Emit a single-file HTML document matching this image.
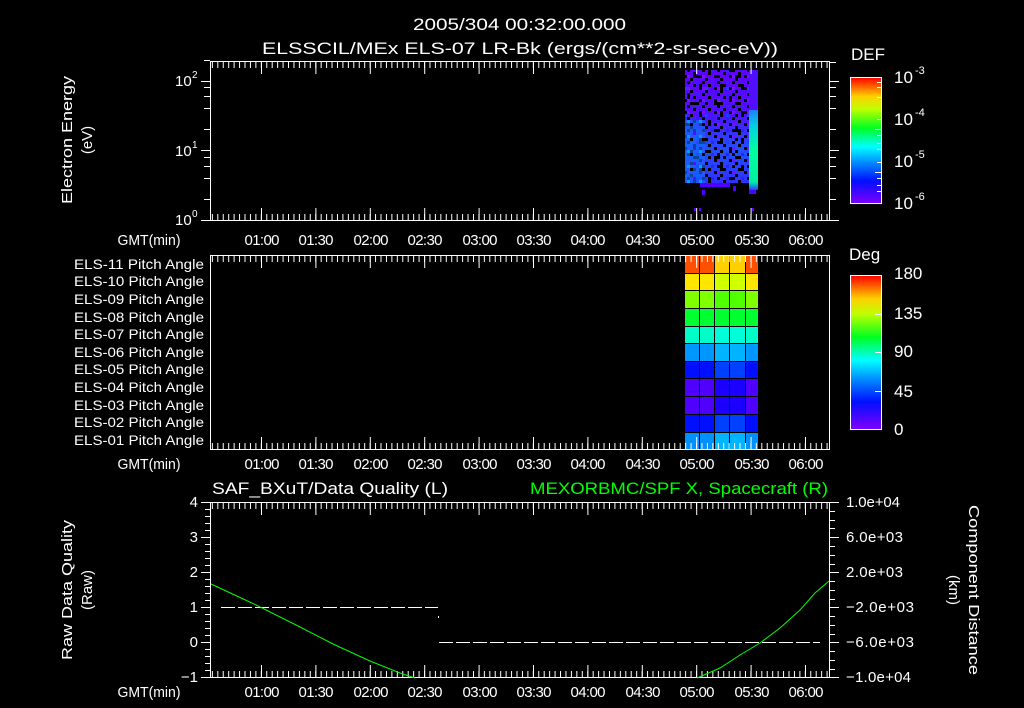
<!DOCTYPE html>
<html><head><meta charset="utf-8"><style>
html,body{margin:0;padding:0;background:#000;width:1024px;height:708px;overflow:hidden}
svg{display:block}
text{font-family:"Liberation Sans",sans-serif;fill:#fff}
</style></head><body>
<svg width="1024" height="708" viewBox="0 0 1024 708" xmlns="http://www.w3.org/2000/svg">
<defs>
<pattern id="noise" patternUnits="userSpaceOnUse" width="15" height="12">
<rect x="3" y="0" width="3" height="3" fill="#000"/><rect x="9" y="3" width="3" height="3" fill="#000"/>
<rect x="0" y="6" width="3" height="3" fill="#000"/><rect x="12" y="9" width="3" height="3" fill="#000"/>
<rect x="6" y="9" width="3" height="3" fill="#3020ff"/><rect x="12" y="3" width="3" height="3" fill="#7a10ff"/>
</pattern>
<pattern id="noiseb" patternUnits="userSpaceOnUse" width="21" height="27">
<rect x="6" y="3" width="3" height="6" fill="#000"/><rect x="15" y="15" width="3" height="3" fill="#000"/>
<rect x="0" y="21" width="6" height="3" fill="#000"/><rect x="12" y="6" width="3" height="3" fill="#2040ff"/>
</pattern>
<pattern id="noise2" patternUnits="userSpaceOnUse" width="12" height="15">
<rect x="6" y="3" width="3" height="3" fill="#000"/><rect x="0" y="9" width="3" height="3" fill="#1060ff"/>
<rect x="9" y="12" width="3" height="3" fill="#5010ff"/><rect x="3" y="0" width="3" height="3" fill="#00a0ff"/>
</pattern>
<linearGradient id="defbar" x1="0" y1="1" x2="0" y2="0">
<stop offset="0" stop-color="#8000ff"/><stop offset="0.18" stop-color="#0010ff"/><stop offset="0.33" stop-color="#0090ff"/>
<stop offset="0.45" stop-color="#00ffff"/><stop offset="0.6" stop-color="#00ff20"/><stop offset="0.75" stop-color="#c0ff00"/>
<stop offset="0.85" stop-color="#ffd000"/><stop offset="1" stop-color="#ff0000"/>
</linearGradient>
<linearGradient id="blue" x1="0" y1="0" x2="0" y2="1">
<stop offset="0" stop-color="#6000ff"/><stop offset="0.4" stop-color="#5010ff"/><stop offset="0.7" stop-color="#2050ff"/><stop offset="1" stop-color="#3030ff"/>
</linearGradient>
<linearGradient id="grn" x1="0" y1="0" x2="0" y2="1">
<stop offset="0" stop-color="#2080ff"/><stop offset="0.2" stop-color="#00d0e0"/><stop offset="0.5" stop-color="#00ffa0"/><stop offset="0.9" stop-color="#00f0a0"/><stop offset="1" stop-color="#2040ff"/>
</linearGradient>
</defs>

<text x="413" y="30" font-size="17" textLength="213" lengthAdjust="spacingAndGlyphs">2005/304 00:32:00.000</text>
<text x="262" y="54" font-size="17" textLength="516" lengthAdjust="spacingAndGlyphs">ELSSCIL/MEx ELS-07 LR-Bk  (ergs/(cm**2-sr-sec-eV))</text>

<rect x="685" y="70" width="64" height="113" fill="url(#blue)"/>
<rect x="685" y="70" width="64" height="113" fill="url(#noise)"/>
<rect x="685" y="70" width="64" height="113" fill="url(#noiseb)"/>
<rect x="685" y="120" width="20" height="63" fill="#1070ff" opacity="0.6"/>
<rect x="685" y="120" width="20" height="63" fill="url(#noise2)"/>
<rect x="749" y="70" width="9" height="40" fill="#5010ff"/>
<rect x="749" y="110" width="9" height="80" fill="url(#grn)"/>
<rect x="749" y="190" width="7" height="4" fill="#5000ff"/>
<rect x="700" y="183" width="30" height="4" fill="#5000ff"/>
<rect x="702" y="190" width="3" height="5" fill="#5000ff"/>
<rect x="733" y="186" width="3" height="5" fill="#5000ff"/>
<rect x="694" y="208" width="2" height="3" fill="#6000ff"/><rect x="699" y="208" width="2" height="3" fill="#6000ff"/><rect x="752" y="208" width="2" height="3" fill="#6000ff"/>
<rect x="210.5" y="61.5" width="619" height="159" fill="none" stroke="#fff" stroke-width="1"/>
<g stroke="#fff">
<line x1="211.86" y1="65" x2="829" y2="65" stroke-width="6" stroke-dasharray="1 4.44"/>
<line x1="261" y1="68" x2="829" y2="68" stroke-width="12" stroke-dasharray="1 53.4"/>
<line x1="211.86" y1="217" x2="829" y2="217" stroke-width="6" stroke-dasharray="1 4.44"/>
<line x1="261" y1="214" x2="829" y2="214" stroke-width="12" stroke-dasharray="1 53.4"/>
</g>
<g stroke="#fff" stroke-width="1">
<path d="M201 220.5H210M204 199.5H210M204 178.5H210M204 166.5H210M204 157.5H210M201 150.5H210M204 129.5H210M204 108.5H210M204 96.5H210M204 87.5H210M201 81.5H210M204 60.5H210"/>
<path d="M830 220.5H839M830 199.5H836M830 178.5H836M830 166.5H836M830 157.5H836M830 150.5H839M830 129.5H836M830 108.5H836M830 96.5H836M830 87.5H836M830 81.5H839M830 62.5H836"/>
</g>
<text x="175" y="225" font-size="15">10</text><text x="192" y="217" font-size="10">0</text>
<text x="175" y="156" font-size="15">10</text><text x="192" y="148" font-size="10">1</text>
<text x="175" y="86" font-size="15">10</text><text x="192" y="78" font-size="10">2</text>
<text transform="translate(72,140) rotate(-90)" font-size="15" text-anchor="middle" textLength="128" lengthAdjust="spacingAndGlyphs">Electron Energy</text>
<text transform="translate(92,140) rotate(-90)" font-size="15" text-anchor="middle">(eV)</text>
<text x="851" y="60" font-size="17">DEF</text>
<rect x="850.5" y="77.5" width="31" height="126" fill="url(#defbar)" stroke="#fff"/>
<g stroke="#fff"><path d="M877 82.5H882M877 87.5H882M877 97.5H882M877 119.5H882M875 129.5H882M877 135.5H882M877 143.5H882M877 149.5H882M877 162.5H882M875 172.5H882M877 178.5H882M877 185.5H882M877 191.5H882"/></g>
<text x="894" y="83" font-size="17">10</text><text x="915" y="74" font-size="11">-3</text>
<text x="894" y="125" font-size="17">10</text><text x="915" y="116" font-size="11">-4</text>
<text x="894" y="167" font-size="17">10</text><text x="915" y="158" font-size="11">-5</text>
<text x="894" y="209" font-size="17">10</text><text x="915" y="200" font-size="11">-6</text>
<g font-size="15" text-anchor="middle">
<text x="149" y="245" textLength="63" lengthAdjust="spacingAndGlyphs">GMT(min)</text>
<text x="262" y="245" textLength="35">01:00</text><text x="316" y="245" textLength="35">01:30</text><text x="371" y="245" textLength="35">02:00</text><text x="425" y="245" textLength="35">02:30</text>
<text x="480" y="245" textLength="35">03:00</text><text x="534" y="245" textLength="35">03:30</text><text x="588" y="245" textLength="35">04:00</text><text x="643" y="245" textLength="35">04:30</text>
<text x="697" y="245" textLength="35">05:00</text><text x="752" y="245" textLength="35">05:30</text><text x="806" y="245" textLength="35">06:00</text>
</g>

<g>
<rect x="685" y="256" width="73" height="18" fill="#ff5000"/><rect x="714" y="256" width="32" height="18" fill="#ffd000"/>
<rect x="685" y="274" width="73" height="17" fill="#ffe600"/><rect x="714" y="274" width="32" height="17" fill="#d0ff00"/>
<rect x="685" y="291" width="73" height="18" fill="#80ff00"/><rect x="714" y="291" width="32" height="18" fill="#50ff00"/>
<rect x="685" y="309" width="73" height="18" fill="#00ff30"/>
<rect x="685" y="327" width="73" height="17" fill="#00ffc8"/><rect x="714" y="327" width="32" height="17" fill="#00ffd8"/>
<rect x="685" y="344" width="73" height="18" fill="#0096ff"/><rect x="714" y="344" width="32" height="18" fill="#00b4ff"/>
<rect x="685" y="362" width="73" height="17" fill="#0010ff"/><rect x="714" y="362" width="32" height="17" fill="#0040ff"/>
<rect x="685" y="379" width="73" height="18" fill="#5000ff"/><rect x="714" y="379" width="32" height="18" fill="#1c00ff"/>
<rect x="685" y="397" width="73" height="18" fill="#5000ff"/><rect x="714" y="397" width="32" height="18" fill="#1c00ff"/>
<rect x="685" y="415" width="73" height="18" fill="#0010ff"/><rect x="714" y="415" width="32" height="18" fill="#0040ff"/>
<rect x="685" y="433" width="73" height="16" fill="#0090ff"/><rect x="714" y="433" width="32" height="16" fill="#00b4ff"/>
<g stroke="#000" stroke-width="1">
<path d="M699.5 256V449M714.5 256V449M729.5 256V449M745.5 256V449"/>
<path d="M685 273.5H758M685 290.5H758M685 308.5H758M685 326.5H758M685 343.5H758M685 361.5H758M685 378.5H758M685 396.5H758M685 414.5H758M685 432.5H758"/>
</g>
</g>
<rect x="210.5" y="255.5" width="619" height="194" fill="none" stroke="#fff"/>
<g stroke="#fff">
<line x1="211.86" y1="259" x2="829" y2="259" stroke-width="6" stroke-dasharray="1 4.44"/>
<line x1="261" y1="262" x2="829" y2="262" stroke-width="12" stroke-dasharray="1 53.4"/>
<line x1="211.86" y1="446" x2="829" y2="446" stroke-width="6" stroke-dasharray="1 4.44"/>
<line x1="261" y1="443" x2="829" y2="443" stroke-width="12" stroke-dasharray="1 53.4"/>
</g>
<g font-size="14" text-anchor="end">
<text x="204" y="269" textLength="130" lengthAdjust="spacingAndGlyphs">ELS-11 Pitch Angle</text><text x="204" y="286" textLength="130" lengthAdjust="spacingAndGlyphs">ELS-10 Pitch Angle</text>
<text x="204" y="304" textLength="130" lengthAdjust="spacingAndGlyphs">ELS-09 Pitch Angle</text><text x="204" y="322" textLength="130" lengthAdjust="spacingAndGlyphs">ELS-08 Pitch Angle</text>
<text x="204" y="339" textLength="130" lengthAdjust="spacingAndGlyphs">ELS-07 Pitch Angle</text><text x="204" y="357" textLength="130" lengthAdjust="spacingAndGlyphs">ELS-06 Pitch Angle</text>
<text x="204" y="374" textLength="130" lengthAdjust="spacingAndGlyphs">ELS-05 Pitch Angle</text><text x="204" y="392" textLength="130" lengthAdjust="spacingAndGlyphs">ELS-04 Pitch Angle</text>
<text x="204" y="410" textLength="130" lengthAdjust="spacingAndGlyphs">ELS-03 Pitch Angle</text><text x="204" y="427" textLength="130" lengthAdjust="spacingAndGlyphs">ELS-02 Pitch Angle</text>
<text x="204" y="445" textLength="130" lengthAdjust="spacingAndGlyphs">ELS-01 Pitch Angle</text>
</g>
<text x="849" y="260" font-size="17">Deg</text>
<rect x="850.5" y="275.5" width="31" height="154" fill="url(#defbar)" stroke="#fff"/>
<g stroke="#fff"><path d="M875 314.5H882M875 352.5H882M875 391.5H882"/></g>
<g font-size="17"><text x="894" y="279">180</text><text x="894" y="319">135</text><text x="894" y="357">90</text><text x="894" y="397">45</text><text x="894" y="435">0</text></g>
<g font-size="15" text-anchor="middle">
<text x="149" y="469" textLength="63" lengthAdjust="spacingAndGlyphs">GMT(min)</text>
<text x="262" y="469" textLength="35">01:00</text><text x="316" y="469" textLength="35">01:30</text><text x="371" y="469" textLength="35">02:00</text><text x="425" y="469" textLength="35">02:30</text>
<text x="480" y="469" textLength="35">03:00</text><text x="534" y="469" textLength="35">03:30</text><text x="588" y="469" textLength="35">04:00</text><text x="643" y="469" textLength="35">04:30</text>
<text x="697" y="469" textLength="35">05:00</text><text x="752" y="469" textLength="35">05:30</text><text x="806" y="469" textLength="35">06:00</text>
</g>

<text x="212" y="494" font-size="17" textLength="236" lengthAdjust="spacingAndGlyphs">SAF_BXuT/Data Quality (L)</text>
<text x="530" y="494" font-size="17" style="fill:#00ff00" textLength="298" lengthAdjust="spacingAndGlyphs">MEXORBMC/SPF X, Spacecraft (R)</text>
<rect x="210.5" y="502.5" width="619" height="175" fill="none" stroke="#fff"/>
<g stroke="#fff">
<line x1="211.86" y1="506" x2="829" y2="506" stroke-width="6" stroke-dasharray="1 4.44"/>
<line x1="261" y1="509" x2="829" y2="509" stroke-width="12" stroke-dasharray="1 53.4"/>
<line x1="211.86" y1="674" x2="829" y2="674" stroke-width="6" stroke-dasharray="1 4.44"/>
<line x1="261" y1="671" x2="829" y2="671" stroke-width="12" stroke-dasharray="1 53.4"/>
</g>
<g stroke="#fff">
<path d="M201 502.5H210M205 509.5H210M205 516.5H210M205 523.5H210M205 530.5H210M201 537.5H210M205 544.5H210M205 551.5H210M205 558.5H210M205 565.5H210M201 572.5H210M205 579.5H210M205 586.5H210M205 593.5H210M205 600.5H210M201 607.5H210M205 614.5H210M205 621.5H210M205 628.5H210M205 635.5H210M201 642.5H210M205 649.5H210M205 656.5H210M205 663.5H210M205 670.5H210M201 677.5H210"/>
<path d="M830 502.5H839M830 511.5H835M830 520.5H835M830 528.5H835M830 537.5H839M830 546.5H835M830 555.5H835M830 564.5H835M830 572.5H839M830 581.5H835M830 590.5H835M830 599.5H835M830 607.5H839M830 616.5H835M830 625.5H835M830 634.5H835M830 642.5H839M830 651.5H835M830 660.5H835M830 669.5H835M830 677.5H839"/>
</g>
<g font-size="15" text-anchor="end">
<text x="198" y="507">4</text><text x="198" y="542">3</text><text x="198" y="577">2</text><text x="198" y="612">1</text><text x="198" y="647">0</text><text x="198" y="682">−1</text>
</g>
<g font-size="15">
<text x="846" y="507" textLength="54">1.0e+04</text><text x="846" y="542" textLength="57">6.0e+03</text><text x="846" y="577" textLength="57">2.0e+03</text>
<text x="846" y="612" textLength="68">−2.0e+03</text><text x="846" y="647" textLength="68">−6.0e+03</text><text x="846" y="682" textLength="65">−1.0e+04</text>
</g>
<text transform="translate(72,590) rotate(-90)" font-size="15" text-anchor="middle" textLength="140" lengthAdjust="spacingAndGlyphs">Raw Data Quality</text>
<text transform="translate(92,590) rotate(-90)" font-size="15" text-anchor="middle">(Raw)</text>
<text transform="translate(969,590) rotate(90)" font-size="15" text-anchor="middle" textLength="170" lengthAdjust="spacingAndGlyphs">Component Distance</text>
<text transform="translate(949,590) rotate(90)" font-size="15" text-anchor="middle">(km)</text>
<path d="M221 607.5H438" stroke="#fff" stroke-dasharray="14 3"/>
<rect x="438" y="616" width="1" height="2" fill="#fff"/>
<path d="M439 642.5H820" stroke="#fff" stroke-dasharray="14 3"/>
<polyline fill="none" stroke="#00ff00" stroke-width="1" points="211,584 254,604 300,627 333,644 370,661 400,673 415,678"/>
<polyline fill="none" stroke="#00ff00" stroke-width="1" points="697,678 720,668 740,655 760,643 780,628 800,610 815,593 829,581"/>
<g font-size="15" text-anchor="middle">
<text x="149" y="697" textLength="63" lengthAdjust="spacingAndGlyphs">GMT(min)</text>
<text x="262" y="697" textLength="35">01:00</text><text x="316" y="697" textLength="35">01:30</text><text x="371" y="697" textLength="35">02:00</text><text x="425" y="697" textLength="35">02:30</text>
<text x="480" y="697" textLength="35">03:00</text><text x="534" y="697" textLength="35">03:30</text><text x="588" y="697" textLength="35">04:00</text><text x="643" y="697" textLength="35">04:30</text>
<text x="697" y="697" textLength="35">05:00</text><text x="752" y="697" textLength="35">05:30</text><text x="806" y="697" textLength="35">06:00</text>
</g>
</svg>
</body></html>
